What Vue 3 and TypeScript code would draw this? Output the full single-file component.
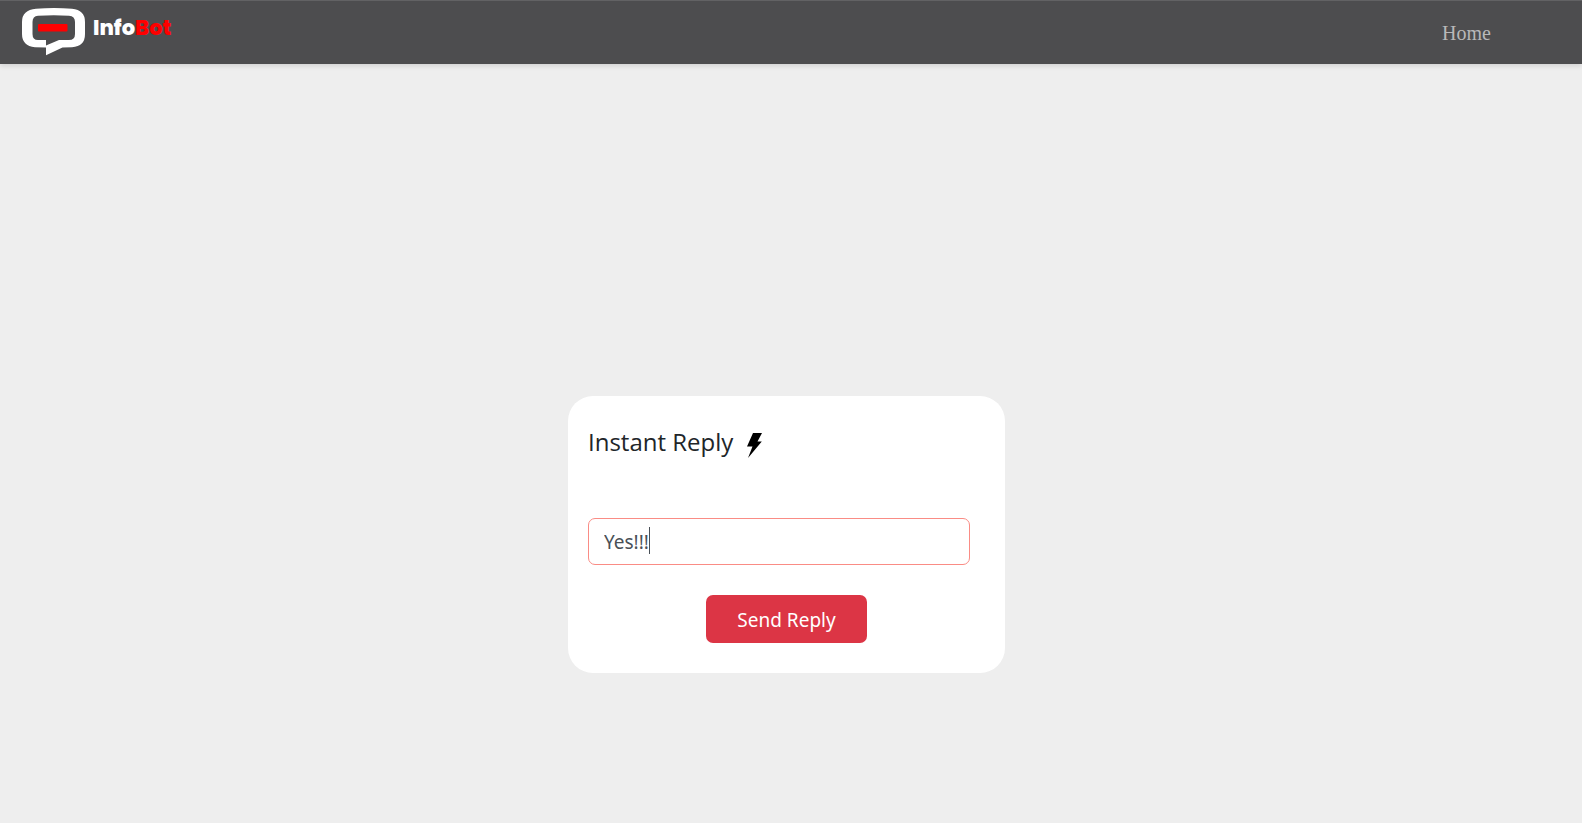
<script setup lang="ts">
import { ref } from 'vue'

const reply = ref<string>('Yes!!!')
const sent = ref<string[]>([])
const typing = ref<boolean>(false)

function sendReply(): void {
  const text = reply.value.trim()
  if (!text) return
  sent.value.push(text)
  reply.value = ''
}
</script>

<template>
  <div class="page">
    <header class="navbar">
      <a class="brand" href="#">
        <svg class="brand-mark" viewBox="0 0 64 48" aria-hidden="true">
          <path
            fill="#fff"
            fill-rule="evenodd"
            d="M14 .8Q32-.8 50 .8Q63 2 63 14V26Q63 38.500 50 39.200L40.500 39.500L24 47.300V39.500L13 39.200Q0 38 0 26V14Q0 2 14 .8ZM16 7.800Q10.500 8.200 10.500 14V26Q10.500 32 16 32H24V37.500L37 32H47Q53 32 53 26V14Q53 8.200 47 7.800Q32 6.800 16 7.800Z"
          />
          <rect x="16" y="16" width="29.500" height="7.500" rx="1" fill="#f00" />
        </svg>
        <span class="brand-name">Info<span class="brand-accent">Bot</span></span>
      </a>
      <nav>
        <a class="nav-link" href="#">Home</a>
      </nav>
    </header>

    <main class="content">
      <form class="card" @submit.prevent="sendReply">
        <h1 class="title">
          <label for="reply">Instant Reply</label>
          <svg class="bolt" viewBox="0 0 15 25" aria-hidden="true">
            <path d="M6 0H15L10.500 8.500H14.800L1 25L5.500 13.500H0Z" />
          </svg>
        </h1>
        <div class="field">
          <input id="reply" v-model="reply" type="text" autocomplete="off" @input="typing = true" />
          <span v-if="!typing && reply" class="caret"></span>
        </div>
        <button class="send" type="submit">Send Reply</button>
      </form>
    </main>
  </div>
</template>

<style>
body {
  background: #eee;
}
</style>

<style scoped>
.page {
  min-height: 100vh;
  box-sizing: border-box;
  background: #eee;
  color: #212529;
  font-family: 'Segoe UI', 'Noto Sans', 'Open Sans', sans-serif;
}

.navbar {
  display: flex;
  align-items: center;
  justify-content: space-between;
  box-sizing: border-box;
  height: 64px;
  padding: 0 91px 2px 22px;
  border-top: 1px solid #626264;
  background: #4d4d4f;
  box-shadow: 0 2px 5px rgba(0, 0, 0, 0.12);
}

.brand {
  display: flex;
  gap: 7px;
  color: #fff;
  text-decoration: none;
}

.brand-mark {
  width: 64px;
  height: 48px;
}

.brand-name {
  font-family: Poppins, Inter, sans-serif;
  font-size: 21px;
  font-weight: 800;
  line-height: 40px;
}

.brand-accent {
  color: #f00;
}

.nav-link {
  display: block;
  padding-top: 2px;
  color: #b8b8b9;
  font-family: 'Liberation Serif', 'Times New Roman', serif;
  font-size: 20px;
  line-height: 24px;
  text-decoration: none;
}

.content {
  display: flex;
  justify-content: center;
  padding: 332px 9px 30px 0;
}

.card {
  display: flex;
  flex-direction: column;
  box-sizing: border-box;
  width: 437px;
  max-width: 100%;
  padding: 30px 20px;
  border-radius: 25px;
  background: #fff;
}

.title {
  display: flex;
  align-items: center;
  gap: 14px;
  margin: 0 0 60px;
  font-family: 'Segoe UI', 'Open Sans', sans-serif;
  font-size: 24px;
  font-weight: 500;
  line-height: 32px;
}

.bolt {
  width: 15px;
  height: 25px;
  margin-top: 6px;
  fill: #000;
}

.field {
  position: relative;
  margin: 0 15px 30px 0;
}

.field input {
  display: block;
  box-sizing: border-box;
  width: 100%;
  height: 47px;
  padding: 8px 15px;
  border: 1px solid #fa8c85;
  border-radius: 7px;
  outline: none;
  background: #fff;
  color: #495057;
  font: inherit;
  font-size: 19px;
}

.caret {
  position: absolute;
  top: 9px;
  left: 61px;
  width: 1px;
  height: 27px;
  background: #495057;
  pointer-events: none;
}

.send {
  align-self: center;
  height: 48px;
  padding: 2px 31px 0;
  border: 0;
  border-radius: 7px;
  background: #dc3545;
  color: #fff;
  font: inherit;
  font-size: 19px;
  cursor: pointer;
}
</style>
